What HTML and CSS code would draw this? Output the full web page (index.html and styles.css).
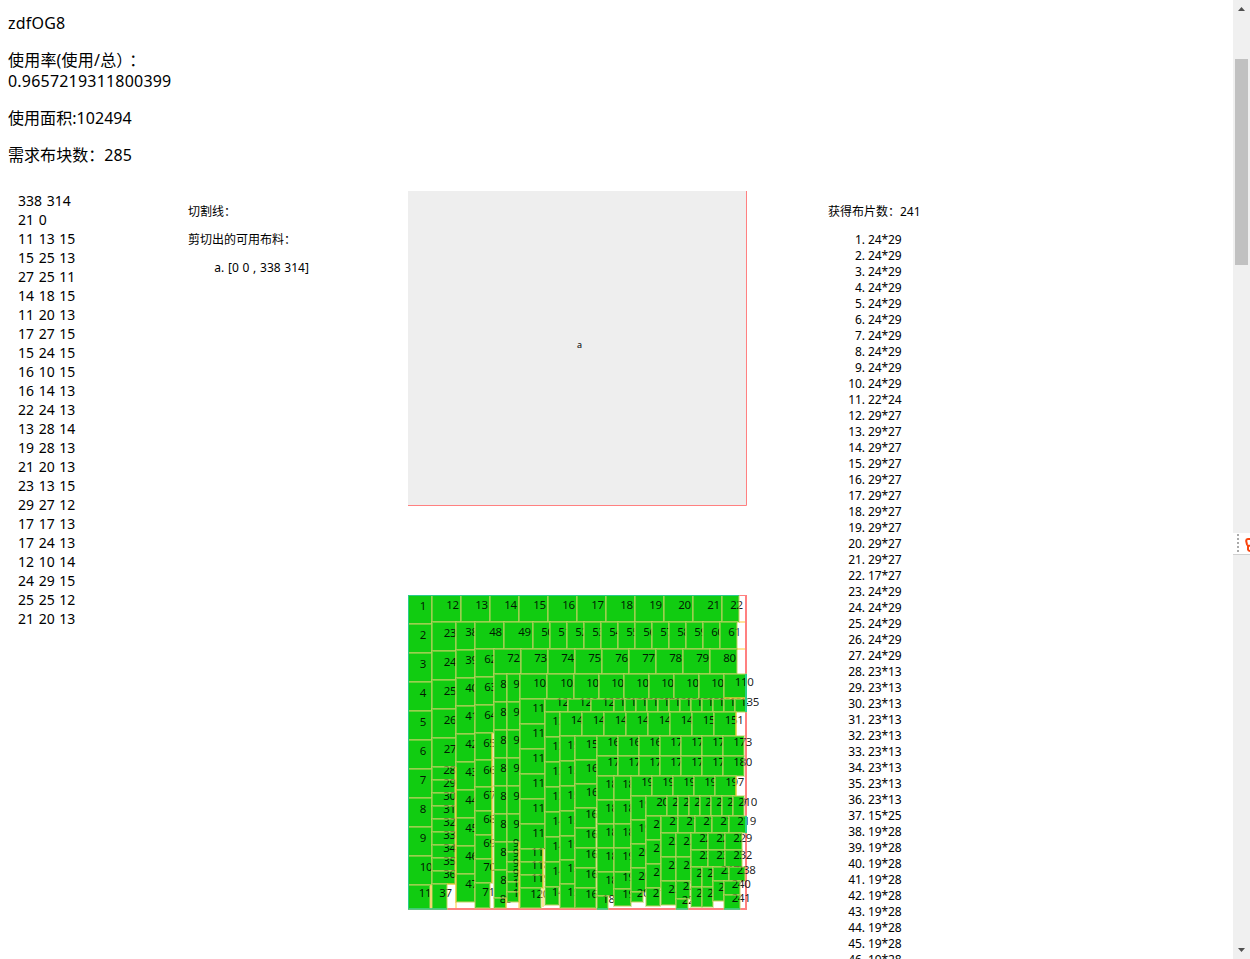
FILE: index.html
```html
<!DOCTYPE html>
<html lang="zh">
<head>
<meta charset="utf-8">
<title>zdfOG8</title>
<link rel="stylesheet" href="styles.css">
</head>
<body>
<main class="page">
  <p class="line">zdfOG8</p>
  <p class="line">使用率(使用/总<span class="wide">）：</span><br>0.9657219311800399</p>
  <p class="line">使用面积:102494</p>
  <p class="line">需求布块数：285</p>
  <div class="columns">
    <pre class="input">338 314
21 0
11 13 15
15 25 13
27 25 11
14 18 15
11 20 13
17 27 15
15 24 15
16 10 15
16 14 13
22 24 13
13 28 14
19 28 13
21 20 13
23 13 15
29 27 12
17 17 13
17 24 13
12 10 14
24 29 15
25 25 12
21 20 13</pre>
    <section class="cuts">
      <p>切割线：</p>
      <p>剪切出的可用布料：</p>
      <ol class="alpha"><li>[0 0 , 338 314]</li></ol>
    </section>
    <section class="drawings">
      <svg class="sheet" width="400" height="400">
        <rect width="338" height="314" fill="#eee"/>
        <path d="M338.5 0V314.5H0" fill="none" stroke="#ff8080"/>
        <text class="sheet-name" x="169" y="157">a</text>
      </svg>
      <svg class="sheet" id="layout" width="400" height="320"></svg>
    </section>
    <section class="pieces">
      <p>获得布片数：241</p>
      <ol id="list"></ol>
    </section>
  </div>
</main>
<aside class="scrollbar">
  <svg class="arrow" width="17" height="17"><path d="M5 11h7l-3.5-4z"/></svg>
  <div class="thumb"></div>
  <svg class="arrow" width="17" height="17"><path d="M5 6h7l-3.5 4z"/></svg>
</aside>
<div class="ime">
  <svg width="17" height="22"><path d="M5 1v20" stroke="#aaa" stroke-width="2" stroke-dasharray="2 2"/><path d="M18 6h-3q-2 .3-1.800 2l.8 3.500q.4 1.300 2 1.300l2-.3M15 13v3.500q.3 1.500 3 1.500" fill="none" stroke="#f9440f" stroke-width="2"/></svg>
</div>
<script src="layout.js"></script>
</body>
</html>
```
FILE: styles.css
```css
body {
  margin: 0;
  height: 959px;
  overflow: hidden;
  display: flex;
  background: #fff;
  color: #000;
  font-family: "Noto Sans", "Noto Sans CJK SC", sans-serif;
  font-size: 16px;
  line-height: 21px;
}
.page {
  flex: 1;
  height: 959px;
  overflow: hidden;
  padding: 13px 0 0 8px;
  box-sizing: border-box;
}
.line { margin: 0 0 16px; letter-spacing: 0.2px; }
.line:nth-child(n+3) { letter-spacing: 0.05px; }
.wide { letter-spacing: 5px; }
.columns { display: flex; padding-top: 9px; }
.input {
  margin: 0;
  width: 170px;
  padding: 0 0 0 10px;
  font: 14px/19px "Noto Sans", sans-serif;
  word-spacing: 1px;
}
.cuts { width: 220px; }
.drawings { width: 420px; display: flex; flex-direction: column; gap: 4px; }
.cuts, .pieces { padding-top: 13px; font-size: 12px; line-height: 16px; }
.cuts p, .pieces p { margin: 0 0 12px; }
.cuts ol, .pieces ol { margin: 0; padding-left: 40px; }
.pieces ol { letter-spacing: -0.1px; }
.alpha { list-style: lower-alpha; word-spacing: 0.6px; }
.sheet { display: block; flex: none; }
.sheet-name { font-size: 9px; }
.piece { fill: #11cc11; stroke: none; }
.edge { fill: none; stroke: #c8d064; stroke-opacity: .5; stroke-width: 2; }
.num { font-size: 11.5px; fill: #000; fill-opacity: .88; letter-spacing: -0.25px; }
.bound { fill: none; stroke: #ff8080; stroke-width: 2; }
.gap { fill: none; stroke: #ffc021; stroke-opacity: .45; stroke-width: 2; }
.touch { fill: none; stroke: #28cd8c; stroke-width: 2; }
.scrollbar {
  width: 17px;
  height: 959px;
  background: #f0f0f0;
  display: flex;
  flex-direction: column;
}
.arrow { display: block; fill: #505050; }
.thumb { width: 13px; height: 206px; margin: 42px 2px 677px; background: #c1c1c1; flex: none; }
.ime {
  position: absolute;
  right: 0;
  top: 533px;
  width: 17px;
  height: 21px;
  background: #fff;
  border-bottom: 1px solid #d0d0d0;
  overflow: hidden;
}
```
FILE: layout.js
```js
// Runs of equal pieces: [x, y, width, height, count, direction]
const runs = [
  [0,0,24,29,10,'v'],[0,290,22,24,1,'v'],[24,0,29,27,10,'h'],[314,0,17,27,1,'h'],
  [24,27,24,29,5,'v'],[24,172,23,13,9,'v'],[24,289,15,25,1,'v'],[48,27,19,28,10,'v'],
  [67,27,29,27,2,'h'],[125,27,17,27,12,'h'],[67,54,19,28,3,'v'],[67,138,17,27,2,'v'],
  [67,192,17,24,4,'v'],[67,288,15,25,1,'v'],[86,54,27,25,9,'h'],[86,79,13,28,8,'v'],
  [86,303,12,10,1,'v'],[99,79,13,28,6,'v'],[99,247,12,10,6,'v'],[112,79,27,25,2,'h'],
  [166,79,25,25,6,'h'],[316,79,22,24,1,'h'],[112,104,25,25,6,'v'],[112,254,23,13,3,'v'],
  [112,293,21,20,1,'v'],[137,104,23,13,3,'h'],[206,104,11,13,12,'h'],[137,117,15,25,7,'v'],
  [137,292,14,18,1,'v'],[152,117,22,24,8,'h'],[152,141,15,25,4,'v'],[152,241,15,24,3,'v'],
  [167,141,22,24,3,'v'],[167,213,21,20,5,'v'],[189,141,21,20,7,'h'],[189,161,21,20,7,'h'],
  [189,181,17,24,5,'v'],[189,301,11,13,1,'v'],[206,181,17,24,4,'v'],[206,277,17,17,2,'v'],
  [223,181,21,20,5,'h'],[223,201,15,24,4,'v'],[223,297,12,10,1,'v'],[238,201,21,20,1,'h'],
  [259,201,11,20,7,'h'],[238,221,15,24,3,'v'],[238,293,14,18,1,'v'],[253,221,17,17,5,'h'],
  [253,238,15,24,3,'v'],[268,238,15,24,2,'v'],[268,286,14,18,1,'v'],[268,304,12,10,1,'v'],
  [283,238,17,17,3,'h'],[283,255,17,17,3,'h'],[283,272,11,20,2,'v'],[294,272,11,20,2,'v'],
  [305,272,16,14,2,'h'],[305,286,11,20,1,'v'],[316,286,16,14,2,'v']
];
let n = 0, out = '<rect class="bound" width="338" height="314"/>', items = '';
for (const [x, y, w, h, count, dir] of runs) {
  for (let i = 0; i < count; i++) {
    const px = dir === 'h' ? x + i * w : x, py = dir === 'v' ? y + i * h : y;
    n++;
    out += `<rect class="piece" x="${px}" y="${py}" width="${w}" height="${h}"/>` +
      `<text class="num" x="${px + w / 2 - 0.3}" y="${py + h / 2}">${n}</text>` +
      `<rect class="edge" x="${px}" y="${py}" width="${w}" height="${h}"/>`;
    items += `<li>${w}*${h}</li>`;
  }
}
// Edges of leftover strips, then the sides where pieces meet the sheet border
out += '<path class="gap" d="M331 27h6M329 54h8M48 172v141M23 290v23M39 289h9M84 138v150M111 247v66M135 254v58M98 303v10M328 117v24M328 181v20M316 103h21"/>';
out += '<path class="touch" d="M0 313V0H331M338 79v38M338 221v17"/>' +
  '<path class="touch" stroke-opacity=".7" d="M0 314h39M189 314h11M268 314h12M316 314h16"/>';
document.getElementById('layout').innerHTML = out;
document.getElementById('list').innerHTML = items;
```
